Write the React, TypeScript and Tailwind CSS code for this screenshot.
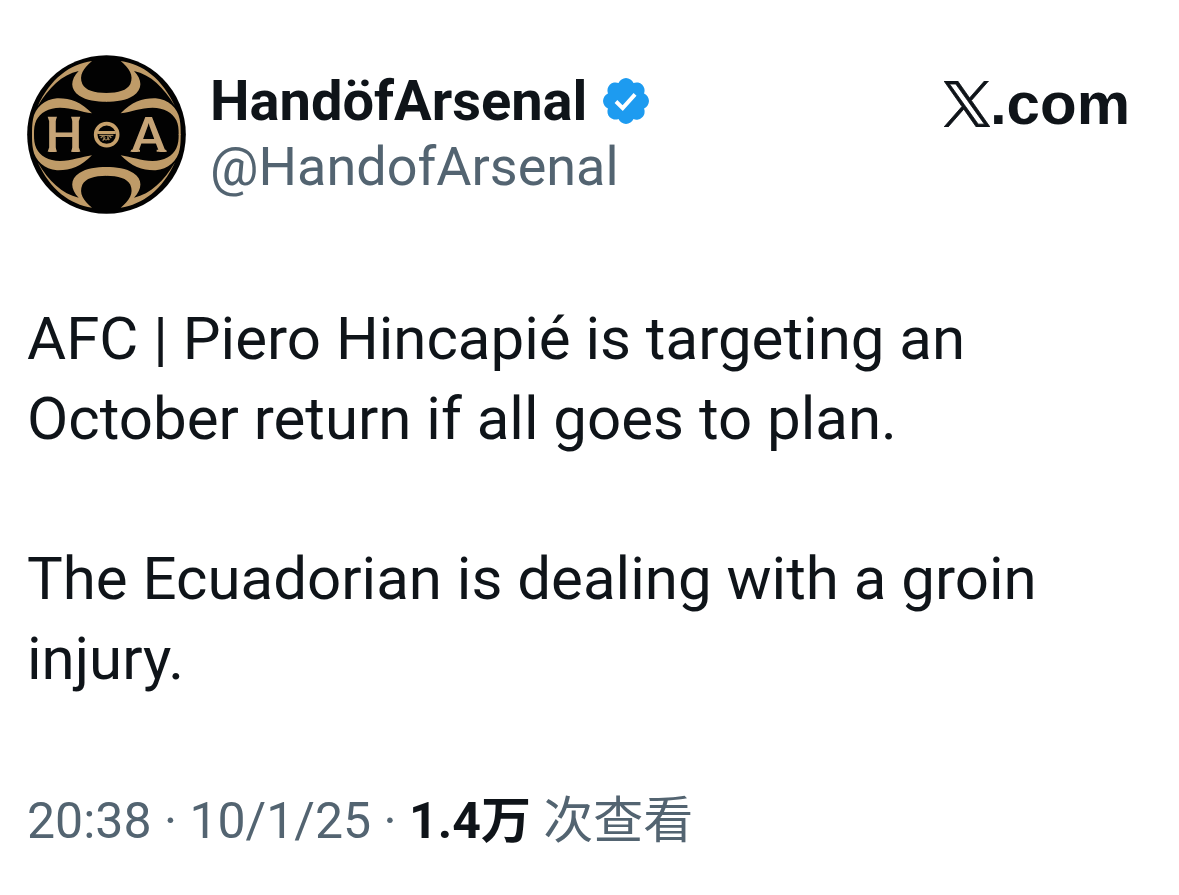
function Quarter() {
  return (
    <>
      <path d="M216 39 C150 48 91 92 53 175 C86 119 126 80 176 69 C151 95 149 124 178 143 C199 157 229 161 260 161 L260 135 C222 135 197 127 187 108 C176 82 190 61 216 39 Z" />
      <path d="M216 196 C182 161 149 150 111 151 C74 153 45 180 39 214 C36 230 36 244 36 260 L42 260 C42 242 43 230 49 217 C60 194 86 179 120 179 C156 180 184 191 216 196 Z" />
    </>
  );
}

function Avatar() {
  return (
    <svg viewBox="21 21 477 477" className="size-[159px] shrink-0" role="img" aria-label="HandöfArsenal">
      <circle cx="259.500" cy="259.500" r="238" fill="#020202" />
      <g fill="#bf9b68">
        <Quarter />
        <g transform="matrix(-1 0 0 1 518 0)"><Quarter /></g>
        <g transform="matrix(1 0 0 -1 0 518)"><Quarter /></g>
        <g transform="matrix(-1 0 0 -1 518 518)"><Quarter /></g>
      </g>
      <g fill="#c6a477">
        <path d="M83 206h28l-4 12H87zM153 206h28l-4 12h-20zM83 311h28l-4-12H87zM153 311h28l-4-12h-20zM331 311h29v-6h-26zM410 311h31l-3-6h-28z" />
        <g className="font-['Lato',sans-serif] text-[146px] font-bold" textAnchor="middle">
          <text x="132" y="311">H</text>
          <text x="386" y="311">A</text>
        </g>
      </g>
      <circle cx="260" cy="260" r="33" fill="none" stroke="#c6a06b" strokeWidth="11" />
      <path d="M232 249h55v9h-55z" fill="#c6a06b" />
      <path d="M238 262h42M242 270l10-8M274 270l-8-8M248 278l8-10M268 276l-6-8" fill="none" stroke="#a1845a" strokeWidth="4" />
      <circle cx="258" cy="269" r="7" fill="none" stroke="#a1845a" strokeWidth="3" />
    </svg>
  );
}

function VerifiedBadge() {
  return (
    <svg viewBox="1.600 1.600 18.800 18.800" className="size-[46px] shrink-0" role="img" aria-label="Verified">
      <path
        fill="#1d9bf0"
        d="M20.396 11c-.018-.646-.215-1.275-.57-1.816-.354-.54-.852-.972-1.438-1.246.223-.607.27-1.264.14-1.897-.131-.634-.437-1.218-.882-1.687-.47-.445-1.053-.75-1.687-.882-.633-.13-1.290-.083-1.897.14-.273-.587-.704-1.086-1.245-1.440S11.647 1.620 11 1.604c-.646.017-1.273.213-1.813.568s-.969.854-1.240 1.440c-.608-.223-1.267-.272-1.902-.14-.635.130-1.220.436-1.690.882-.445.470-.749 1.055-.878 1.688-.130.633-.080 1.290.144 1.896-.587.274-1.087.705-1.443 1.245-.356.540-.555 1.170-.574 1.817.020.647.218 1.276.574 1.817.356.540.856.972 1.443 1.245-.224.606-.274 1.263-.144 1.896.130.634.433 1.218.877 1.688.470.443 1.054.747 1.687.878.633.132 1.290.084 1.897-.136.274.586.705 1.084 1.246 1.439.540.354 1.170.551 1.816.569.647-.016 1.276-.213 1.817-.567s.972-.854 1.245-1.440c.604.239 1.266.296 1.903.164.636-.132 1.220-.447 1.680-.907.460-.460.776-1.044.908-1.681s.075-1.299-.165-1.903c.586-.274 1.084-.705 1.439-1.246.354-.540.551-1.170.569-1.816z"
      />
      <path d="m6.900 11.200 2.750 2.700 5.050-5.600" fill="none" stroke="#fff" strokeWidth="1.600" />
    </svg>
  );
}

function XLogo() {
  return (
    <svg viewBox="1 1 22 22" className="size-[46px] shrink-0" fill="#0f1419" role="img" aria-label="X">
      <path
        d="M14.095 10.316 22.286 1h-1.940l-7.115 8.088L7.551 1H1l8.590 12.231L1 23h1.940l7.510-8.543L16.450 23H23l-8.905-12.684zm-2.658 3.022-.872-1.218L3.640 2.432h2.980l5.590 7.821.869 1.219 7.265 10.166h-2.982l-5.926-8.300z"
        stroke="#0f1419"
        strokeWidth=".4"
      />
    </svg>
  );
}

export default function App() {
  return (
    <article className="min-h-screen bg-white px-[27px] pt-[55px] pb-10 font-['Roboto','Noto_Sans_CJK_SC',sans-serif] text-[#0f1419]">
      <header className="flex items-start justify-between pr-[22px]">
        <div className="flex gap-6">
          <Avatar />
          <div className="pt-[13px]">
            <div className="flex items-center gap-4">
              <h1 className="text-[56px] leading-[66px] font-bold">HandöfArsenal</h1>
              <VerifiedBadge />
            </div>
            <p className="text-[54px] leading-[66px] text-[#536471]">@HandofArsenal</p>
          </div>
        </div>
        <a href="https://x.com" className="flex items-center pt-4">
          <XLogo />
          <span className="font-['Liberation_Sans',sans-serif] text-[60px] leading-[66px] font-bold">.com</span>
        </a>
      </header>
      <div className="mt-[85px] space-y-20 text-[60px] leading-[80px]">
        <p>AFC | Piero Hincapié is targeting an October return if all goes to plan.</p>
        <p>The Ecuadorian is dealing with a groin injury.</p>
      </div>
      <footer className="mt-[84px] text-[50px] leading-[76px] text-[#536471]">
        20:38 · 10/1/25 · <strong className="font-bold text-[#0f1419]">1.4万</strong> 次查看
      </footer>
    </article>
  );
}
